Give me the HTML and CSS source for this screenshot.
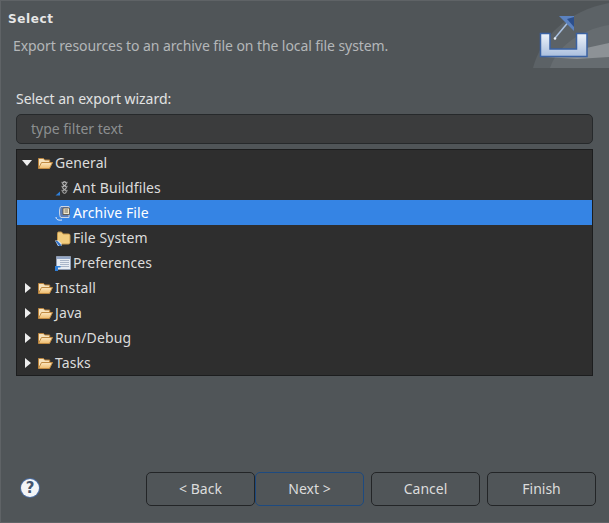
FILE: index.html
```html
<!DOCTYPE html>
<html lang="en">
<head>
<meta charset="utf-8">
<title>Export</title>
<link rel="stylesheet" href="styles.css">
</head>
<body>
<svg class="defs" width="0" height="0">
  <defs>
    <linearGradient id="fold" x1="0" y1="0" x2="0" y2="1"><stop offset="0" stop-color="#fbe6c0"/><stop offset="1" stop-color="#eebb6c"/></linearGradient>
    <linearGradient id="tray" x1="0" y1="0" x2="0" y2="1"><stop offset="0" stop-color="#eef3fa"/><stop offset="1" stop-color="#a9bedd"/></linearGradient>
    <symbol id="folder" viewBox="0 0 16 16">
      <path d="M1.500 13V3.500h5l1.200 1.500h5v2.500" fill="#f6e2bd" stroke="#b9823b"/>
      <path d="M1.500 13.500L4.500 7.500h11l-3 6z" fill="url(#fold)" stroke="#c08a42"/>
    </symbol>
  </defs>
</svg>
<main class="dialog">
  <header class="banner">
    <div class="banner-text">
      <h1 class="title">Select</h1>
      <p class="desc">Export resources to an archive file on the local file system.</p>
    </div>
    <svg class="banner-art" width="76" height="67" viewBox="0 0 76 67">
      <path d="M0 67C8 36 34 10 76 2V67z" fill="#5c6266"/>
      <path d="M17 67C24 46 46 29 76 24V67z" fill="#666c70"/>
      <path d="M12 56L76 42V56L44 58z" fill="#8d9296"/>
      <path d="M7.500 32.500h9.500v15.500h26.500V32.500h10.500v23H7.500z" fill="url(#tray)" stroke="#3a62a3" stroke-width="1.500"/>
      <path d="M22 37L37 19" stroke="#a9c0e0" stroke-width="1.500" fill="none"/>
      <circle cx="22" cy="37.500" r="1.300" fill="#e6eef8"/>
      <path d="M26 15H41V30z" fill="#5b82c0"/>
      <path d="M34 18L41 16V26z" fill="#2c4f8c"/>
    </svg>
  </header>
  <section class="body">
    <label class="field-label" for="filter">Select an export wizard:</label>
    <input class="filter" id="filter" type="text" placeholder="type filter text">
    <ul class="tree">
      <li class="row">
        <span class="tw down"></span>
        <svg class="ic"><use href="#folder"/></svg>
        <span>General</span>
      </li>
      <li class="row child">
        <svg class="ic" viewBox="0 0 16 16">
          <path d="M6 2.500h7M6 6.500h7M6 10.500h7" stroke="#666" stroke-width="1.500"/>
          <circle cx="9.500" cy="3.500" r="1.800" fill="none" stroke="#d5d5d5"/>
          <circle cx="9.500" cy="7.500" r="1.800" fill="none" stroke="#d5d5d5"/>
          <circle cx="9.500" cy="11.500" r="1.800" fill="none" stroke="#bbb"/>
          <path d="M0.500 15.500L5 11.500V15.500z" fill="#2f7fd8"/>
        </svg>
        <span>Ant Buildfiles</span>
      </li>
      <li class="row child selected">
        <svg class="ic" viewBox="0 0 16 16">
          <path d="M6 1.500h8v11H6c-2 0-2-11 0-11z" fill="#5c7fb8" stroke="#cdd7e6"/>
          <path d="M8 3h6.500v6.500H8z" fill="#f0e9cf" stroke="#55493a" stroke-width=".8"/>
          <path d="M9.500 5h3.500M9.500 7h3.500" stroke="#55493a" stroke-width=".8"/>
          <path d="M1 12c0 3 3 3.500 6 3" stroke="#e8eef8" fill="none"/>
        </svg>
        <span>Archive File</span>
      </li>
      <li class="row child">
        <svg class="ic" viewBox="0 0 16 16">
          <path d="M2.500 12V3.500c0-1 .5-1.500 1-1.500h3l1.500 2h5.500c1 0 1.500 .5 1.500 1.500v7c0 .7-.5 1.500-1.500 1.500H5z" fill="#f2cd7f" stroke="#c99b4d"/>
          <path d="M0 10.500h3.500l3 3v2.500H3z" fill="#dfe9f6"/>
          <path d="M.5 11h2l3.500 3.500V16H4z" fill="#2f6fc4"/>
        </svg>
        <span>File System</span>
      </li>
      <li class="row child">
        <svg class="ic" viewBox="0 0 16 16">
          <path d="M1.500 1.500h14v13h-14z" fill="#e7ecf3" stroke="#8f9cb2"/>
          <path d="M2 2h13v2H2z" fill="#93a6c6"/>
          <path d="M5 5.500h9M5 7.500h9M5 9.500h9M5 11.500h9" stroke="#a9b5c8"/>
          <path d="M0 11h5.500v1.500H3V16H0z" fill="#2f7fd8"/>
        </svg>
        <span>Preferences</span>
      </li>
      <li class="row"><span class="tw right"></span><svg class="ic"><use href="#folder"/></svg><span>Install</span></li>
      <li class="row"><span class="tw right"></span><svg class="ic"><use href="#folder"/></svg><span>Java</span></li>
      <li class="row"><span class="tw right"></span><svg class="ic"><use href="#folder"/></svg><span>Run/Debug</span></li>
      <li class="row"><span class="tw right"></span><svg class="ic"><use href="#folder"/></svg><span>Tasks</span></li>
    </ul>
  </section>
  <footer class="footer">
    <span class="help">?</span>
    <div class="buttons">
      <div class="pair">
        <button class="btn" type="button">&lt; Back</button>
        <button class="btn default" type="button">Next &gt;</button>
      </div>
      <button class="btn" type="button">Cancel</button>
      <button class="btn" type="button">Finish</button>
    </div>
  </footer>
</main>
</body>
</html>
```

FILE: styles.css
```css
* { box-sizing: border-box; }
html, body { margin: 0; height: 100%; }
body {
  background: #505558;
  color: #e4e4e4;
  font-family: "Noto Sans", "Open Sans", sans-serif;
  font-size: 14px;
  overflow: hidden;
}
.defs { position: absolute; }
.dialog {
  width: 609px;
  height: 523px;
  display: flex;
  flex-direction: column;
  border-top: 1px solid #5f6366;
  border-left: 1px solid #5f6366;
  border-bottom: 1px solid #5f6366;
}
.banner {
  height: 67px;
  display: flex;
  justify-content: space-between;
  align-items: flex-start;
}
.banner-text { padding: 10px 0 0 7px; }
.title {
  margin: 0;
  font: bold 12px/15px "DejaVu Sans", sans-serif;
  letter-spacing: 0.6px;
  color: #e6e6e6;
  padding-top: 1px;
}
.desc {
  margin: 9px 0 0 5px;
  font-size: 14px;
  line-height: 20px;
  letter-spacing: -0.08px;
  color: #b4b7b9;
}
.banner-art { flex: none; }
.body {
  flex: 1;
  display: flex;
  flex-direction: column;
  padding: 21px 15px 0 15px;
}
.field-label {
  font-size: 14px;
  line-height: 20px;
  letter-spacing: -0.04px;
  color: #e2e3e3;
}
.filter {
  margin-top: 5px;
  height: 30px;
  width: 577px;
  border: 1px solid #26292b;
  border-radius: 5px;
  background: #3b3c3d;
  padding: 0 14px 2px;
  font: 14px "Noto Sans", sans-serif;
  color: #e4e4e4;
  outline: none;
}
.filter::placeholder { color: #8c8f90; opacity: 1; }
.tree {
  list-style: none;
  margin: 5px 0 0;
  padding: 0;
  width: 577px;
  height: 227px;
  background: #2e2e2e;
  border: 1px solid #1c1d1e;
}
.row {
  height: 25px;
  display: flex;
  align-items: center;
  padding-left: 5px;
  color: #dcdcdc;
  line-height: 20px;
  letter-spacing: 0.1px;
}
.row.child { padding-left: 38px; }
.row.selected { background: #3584e4; color: #fff; }
.tw { width: 12px; height: 12px; flex: none; position: relative; margin-right: 3px; }
.tw.down::before {
  content: ""; position: absolute; left: 0; top: 3px;
  border-left: 5.500px solid transparent; border-right: 5.500px solid transparent; border-top: 6px solid #eee;
}
.tw.right::before {
  content: ""; position: absolute; left: 3px; top: 1px;
  border-top: 5.500px solid transparent; border-bottom: 5.500px solid transparent; border-left: 6px solid #eee;
}
.ic { width: 16px; height: 16px; flex: none; margin-right: 2px; overflow: visible; }
.footer {
  height: 67px;
  display: flex;
  align-items: flex-start;
  justify-content: space-between;
  padding: 17px 13px 0 20px;
}
.help {
  width: 18px;
  height: 18px;
  margin-top: 7px;
  border-radius: 50%;
  background: #f4f5f7;
  box-shadow: 0 0 0 1px #4c6fa5;
  color: #44546e;
  font: bold 15px/18px "DejaVu Sans", sans-serif;
  text-align: center;
}
.buttons { display: flex; gap: 7px; }
.pair { display: flex; }
.btn {
  width: 109px;
  height: 34px;
  border: 1px solid #232527;
  border-radius: 5px;
  background: #505558;
  color: #dcdcdc;
  font: 14px "Noto Sans", sans-serif;
  padding: 0 0 2px;
}
.btn.default { border-color: #1d4a80; }
```
